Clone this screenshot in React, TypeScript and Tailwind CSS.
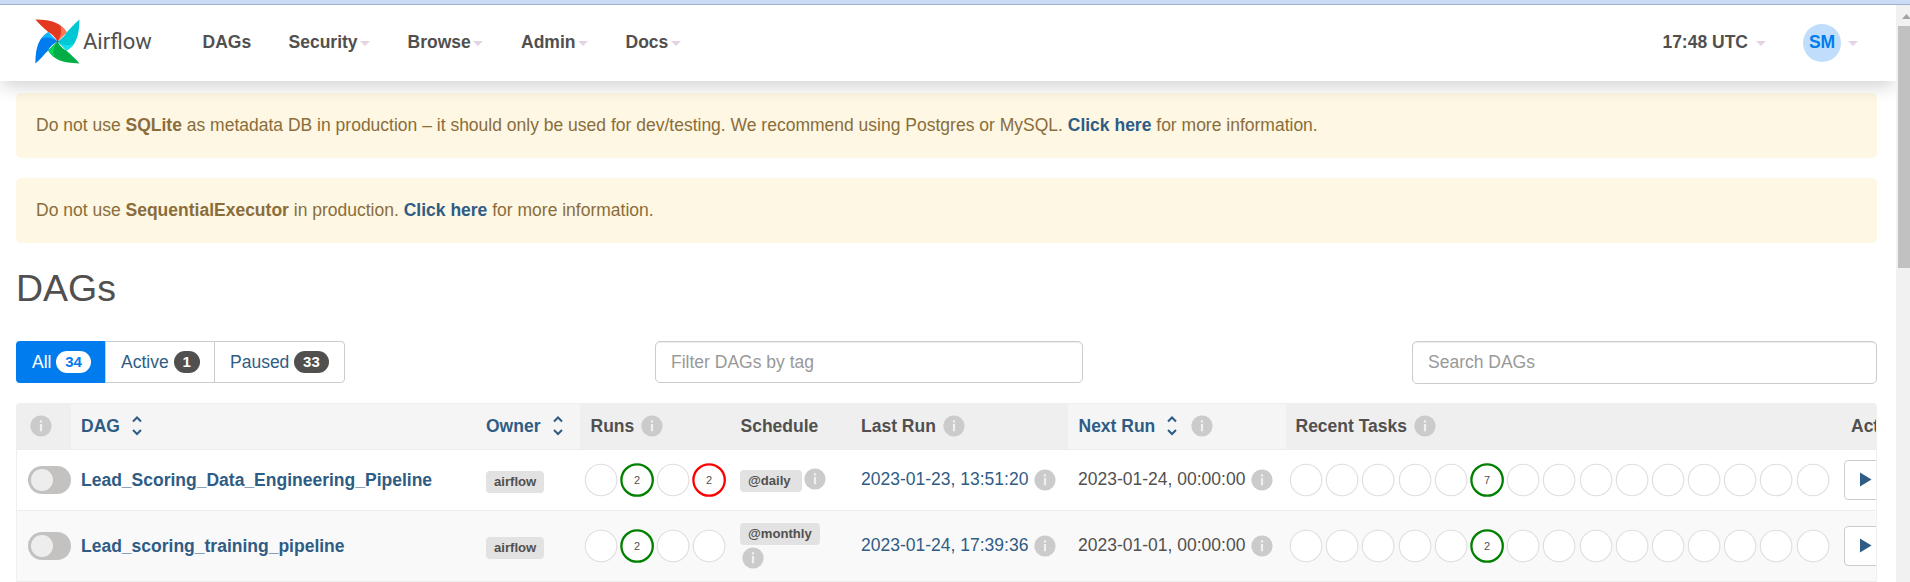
import React from "react";

const navItems = [
  { label: "DAGs", caret: false, w: "w-[86px]" },
  { label: "Security", caret: true, w: "w-[119px]" },
  { label: "Browse", caret: true, w: "w-[113.5px]" },
  { label: "Admin", caret: true, w: "w-[104.5px]" },
  { label: "Docs", caret: true, w: "w-[80px]" },
];

const blades = [
  { angle: 0, main: "#e43921", light: "#ff7557" },
  { angle: 90, main: "#00c7d4", light: "#11e1ee" },
  { angle: 180, main: "#00ad46", light: "#04d659" },
  { angle: 270, main: "#017cee", light: "#0cb6ff" },
];

function Caret({ className = "" }: { className?: string }) {
  return (
    <svg className={`block shrink-0 ${className}`} width="10" height="5" viewBox="0 0 10 5">
      <path d="M0 0h10L5 5z" fill="#e3d3e4" />
    </svg>
  );
}

function Pinwheel() {
  return (
    <svg width="45" height="45" viewBox="0 0 45 45" className="block shrink-0">
      {blades.map((b) => (
        <g key={b.angle} transform={`rotate(${b.angle} 22.4 22.4)`}>
          <path d="M22.4 22.4L31.600 13.200C26.500 4.500 18 0.400 0.400 0.400C4.500 5.500 9 9 13.500 13.300C17 15 20 18 22.400 22.400z" fill={b.main} />
          <path d="M22.400 22.400L31.600 13.200C30 10.500 28 8.500 25.300 6.600C27 12 26.500 17 22.400 22.400z" fill={b.light} />
        </g>
      ))}
      <circle cx="22.400" cy="22.400" r="0.900" fill="#51504f" />
    </svg>
  );
}

function Info({ className = "" }: { className?: string }) {
  return (
    <svg className={`block shrink-0 ${className}`} width="22" height="22" viewBox="0 0 22 22">
      <circle cx="11" cy="11" r="10.600" fill="#cbcbcb" />
      <path d="M9.900 5.300h2.200v2.100H9.900zM9.900 9h2.200v7.200H9.900z" fill="#f0f0f0" />
    </svg>
  );
}

function Sort({ className = "" }: { className?: string }) {
  return (
    <svg className={`block shrink-0 ${className}`} width="10" height="20" viewBox="0 0 10 20" fill="none" stroke="#2f5c85" strokeWidth="2">
      <path d="M1 5.500l4-4 4 4M1 14l4 4 4-4" />
    </svg>
  );
}

function Ring({ n, tone }: { n?: number; tone?: "green" | "red" }) {
  const color = tone === "green" ? "green" : tone === "red" ? "red" : "#dedede";
  return (
    <svg className="block shrink-0" width="36.200" height="36" viewBox="0 0 36.200 36">
      <circle cx="18.100" cy="18" r={tone ? 15.7 : 15.8} fill="#fff" stroke={color} strokeWidth={tone ? 2.3 : 1.1} />
      {n !== undefined && (
        <text x="18.100" y="22" textAnchor="middle" fontSize="11" fill="#51504f" fontFamily="Liberation Sans, sans-serif">
          {n}
        </text>
      )}
    </svg>
  );
}

function Badge({ children, className = "" }: { children: React.ReactNode; className?: string }) {
  return (
    <span className={`block h-[22px] rounded-[4px] bg-[#e2e2e2] px-2 text-[13.125px] leading-[21px] font-bold text-[#51504f] ${className}`}>
      {children}
    </span>
  );
}

const cols = "grid grid-cols-[54px_405px_104px_150px_121px_217px_218px_555px_120px]";

type Row = {
  dag: string;
  runs: { n?: number; tone?: "green" | "red" }[];
  schedule: string;
  wrap: boolean;
  last: string;
  next: string;
  tasks: number;
};

const rows: Row[] = [
  {
    dag: "Lead_Scoring_Data_Engineering_Pipeline",
    runs: [{}, { n: 2, tone: "green" }, {}, { n: 2, tone: "red" }],
    schedule: "@daily",
    wrap: false,
    last: "2023-01-23, 13:51:20",
    next: "2023-01-24, 00:00:00",
    tasks: 7,
  },
  {
    dag: "Lead_scoring_training_pipeline",
    runs: [{}, { n: 2, tone: "green" }, {}, {}],
    schedule: "@monthly",
    wrap: true,
    last: "2023-01-24, 17:39:36",
    next: "2023-01-01, 00:00:00",
    tasks: 2,
  },
];

function TableRow({ row }: { row: Row }) {
  return (
    <div className={`${cols} ${row.wrap ? "h-[71px] bg-[#f9f9f9]" : "h-[61px] bg-white"} items-center border-b border-[#ededed]`}>
      <div className="pl-[11px]">
        <div className="flex h-[28px] w-[43px] items-center rounded-full bg-[#c3c2c1] pl-[3px]">
          <div className="size-[22px] rounded-full bg-[#ededed]" />
        </div>
      </div>
      <div className="pl-[10px] font-bold text-[#2f5c85]">{row.dag}</div>
      <div className="flex pt-[3px] pl-[10px]">
        <Badge>airflow</Badge>
      </div>
      <div className="flex pl-[2.500px]">
        {row.runs.map((r, i) => (
          <Ring key={i} n={r.n} tone={r.tone} />
        ))}
      </div>
      {row.wrap ? (
        <div className="flex flex-col items-start gap-[2px] pl-[10px]">
          <Badge>{row.schedule}</Badge>
          <Info className="ml-[2px]" />
        </div>
      ) : (
        <div className="flex pl-[10px]">
          <Badge className="mt-[2px] w-[62px]">{row.schedule}</Badge>
          <Info className="ml-[2px]" />
        </div>
      )}
      <div className="flex items-center pl-[10px] text-[#2f5c85]">
        <span className="-mt-[2px]">{row.last}</span>
        <Info className="ml-[6px]" />
      </div>
      <div className="flex items-center pl-[10px]">
        <span className="-mt-[2px]">{row.next}</span>
        <Info className="ml-[6px]" />
      </div>
      <div className="flex pl-[2px]">
        {Array.from({ length: 15 }, (_, i) => (
          <Ring key={i} n={i === 5 ? row.tasks : undefined} tone={i === 5 ? "green" : undefined} />
        ))}
      </div>
      <div className="pl-[3px]">
        <div className="flex h-[40px] w-[52px] items-center rounded-[4px] border border-[#ccc] bg-white pb-[2px] pl-[15px]">
          <svg width="12" height="15" viewBox="0 0 12 15">
            <path d="M0 0.500v14L11.500 7.500z" fill="#2f5c85" />
          </svg>
        </div>
      </div>
    </div>
  );
}

export default function App() {
  return (
    <div className="flex h-[582px] w-[1910px] flex-col overflow-hidden bg-white font-['Liberation_Sans',Arial,sans-serif] text-[17.5px] leading-[25px] text-[#51504f]">
      <div className="h-[5px] shrink-0 border-b border-[#9fb0cd] bg-[#cbdcf6]" />
      <div className="flex min-h-0 flex-1">
        <div className="flex w-[1896px] shrink-0 flex-col overflow-hidden">
          <header className="relative z-10 flex h-[76px] shrink-0 items-center bg-white pb-[2px] pl-[35px] font-bold shadow-[0_6px_18px_-2px_rgba(0,0,0,0.2)]">
            <div className="flex w-[167.500px] items-center pb-[2px]">
              <Pinwheel />
              <span className="ml-[3px] font-['Roboto',sans-serif] text-[22px] font-normal">Airflow</span>
            </div>
            <nav className="flex">
              {navItems.map((it) => (
                <div key={it.label} className={`flex items-center ${it.w}`}>
                  {it.label}
                  {it.caret && <Caret className="mt-[2px] ml-[2.500px]" />}
                </div>
              ))}
            </nav>
            <div className="ml-auto flex items-center pr-[38px]">
              <span>17:48 UTC</span>
              <Caret className="mt-[2px] ml-[8px]" />
              <div className="mt-[2px] ml-[37px] flex size-[38px] items-center justify-center rounded-full bg-[#c0defb] pb-px text-[#017cee]">SM</div>
              <Caret className="mt-[2px] ml-[7px]" />
            </div>
          </header>
          <main className="flex flex-col pt-[12px] pr-[19px] pl-[16px]">
            <div className="flex h-[65px] items-center rounded-[5px] bg-[#fdf7e3] px-[20px] pb-[1px] text-[#8a6d3b]">
              <p>
                Do not use <b>SQLite</b> as metadata DB in production – it should only be used for dev/testing. We recommend using Postgres or MySQL.{" "}
                <b className="text-[#2f5c85]">Click here</b> for more information.
              </p>
            </div>
            <div className="mt-[20px] flex h-[65px] items-center rounded-[5px] bg-[#fdf7e3] px-[20px] pb-[1px] text-[#8a6d3b]">
              <p>
                Do not use <b>SequentialExecutor</b> in production. <b className="text-[#2f5c85]">Click here</b> for more information.
              </p>
            </div>
            <h1 className="mt-[25px] h-[42px] text-[37.5px] leading-[41px]">DAGs</h1>
            <div className="mt-[31px] flex h-[42px]">
              <div className="flex text-[#2f5c85]">
                <div className="flex w-[89px] items-center rounded-l-[4px] bg-[#017cee] pl-[16px] text-white">
                  All
                  <span className="ml-[5px] rounded-full bg-white px-[8.750px] text-[15px] leading-[22px] font-bold text-[#017cee]">34</span>
                </div>
                <div className="flex w-[110px] items-center border border-[#ccc] pl-[15px]">
                  Active
                  <span className="ml-[5px] rounded-full bg-[#51504f] px-[8.750px] text-[15px] leading-[22px] font-bold text-white">1</span>
                </div>
                <div className="-ml-px flex w-[131px] items-center rounded-r-[4px] border border-[#ccc] pl-[15px]">
                  Paused
                  <span className="ml-[5px] rounded-full bg-[#51504f] px-[8.750px] text-[15px] leading-[22px] font-bold text-white">33</span>
                </div>
              </div>
              <div className="ml-[310px] flex w-[428px] items-center rounded-[5px] border border-[#ccc] pl-[15px] text-[#999] shadow-[inset_0_1px_1px_rgba(0,0,0,0.075)]">
                Filter DAGs by tag
              </div>
              <div className="ml-auto flex h-[43px] w-[465px] items-center rounded-[5px] border border-[#ccc] pb-px pl-[15px] text-[#999] shadow-[inset_0_1px_1px_rgba(0,0,0,0.075)]">
                Search DAGs
              </div>
            </div>
            <div className="mt-[20px] w-[1861px] overflow-hidden rounded-t-[4px] border border-b-0 border-[#efefef]">
              <div className={`${cols} h-[46px] items-stretch border-b border-[#ededed] bg-[#efefef] font-bold *:flex *:items-center *:pb-px`}>
                <div className="pl-[13px]"><Info /></div>
                <div className="bg-[#f5f5f5] pl-[10px] text-[#2f5c85]">
                  DAG <Sort className="ml-[12px]" />
                </div>
                <div className="bg-[#f5f5f5] pl-[10px] text-[#2f5c85]">
                  Owner <Sort className="ml-[13px]" />
                </div>
                <div className="pl-[10.500px]">Runs <Info className="ml-[7px]" /></div>
                <div className="pl-[10.500px]">Schedule</div>
                <div className="pl-[10px]">Last Run <Info className="ml-[7px]" /></div>
                <div className="bg-[#f5f5f5] pl-[10.500px] text-[#2f5c85]">
                  Next Run <Sort className="ml-[12px]" /> <Info className="ml-[14px]" />
                </div>
                <div className="pl-[9.500px]">Recent Tasks <Info className="ml-[7px]" /></div>
                <div className="pl-[10px]">Actions</div>
              </div>
              {rows.map((r) => (
                <TableRow key={r.dag} row={r} />
              ))}
            </div>
          </main>
        </div>
        <div className="flex w-[14px] shrink-0 flex-col bg-[#f1f1f1] pt-[9px] pl-[2px]">
          <svg className="ml-[4px] block" width="8" height="5" viewBox="0 0 8 5">
            <path d="M0 5L4.500 0L9 5z" fill="#a3a3a3" />
          </svg>
          <div className="mt-[7px] h-[242px] bg-[#c1c1c1]" />
        </div>
      </div>
    </div>
  );
}
